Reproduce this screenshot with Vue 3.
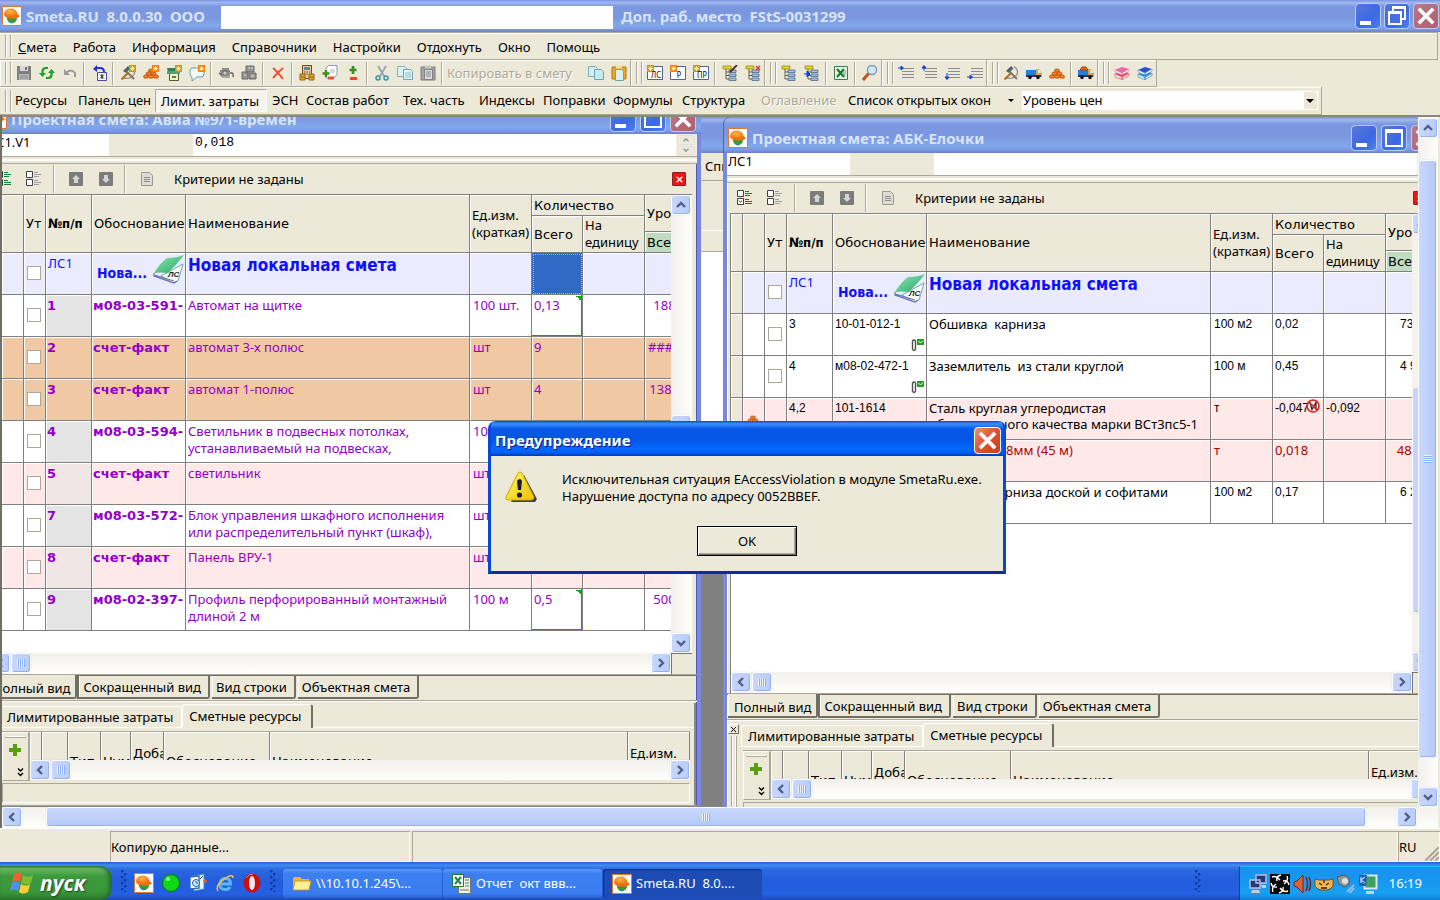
<script setup>
const menu = ['Работа', 'Информация', 'Справочники', 'Настройки', 'Отдохнуть', 'Окно', 'Помощь']

const appTitle = 'Smeta.RU  8.0.0.30  ООО'
const seatTitle = 'Доп. раб. место  FStS-0031299'
const tasks = [
  { icon: 'folder', text: '\\\\10.10.1.245\\...' },
  { icon: 'xls', text: 'Отчет  окт ввв...' },
  { icon: 'helmet', text: 'Smeta.RU  8.0....', on: true },
]

const toolGroups = [
  ['save', 'refresh', 'undo', '|wide', 'lock', '|', 'n-hammer', 'n-bricks', 'n-box', 'n-note', '|', 'teapot', 'blocks', '|', 'delete', '|', 'calc', 'sheetpm', 'plusminus', '|', 'cut', 'copy', 'paste', '|', 'text', 'copy2', 'paste2'],
  ['doc-ЛС', 'doc-Р', 'doc-ПР', '|', 'tree-pen', 'tree-x'],
  ['tree', 'tree-in', '|', 'excel', '|', 'search'],
  ['l-right', 'l-up', 'l-down', 'l-in'],
  ['hammer', 'truck', 'bricks', '|', 'truckload'],
  ['bookred', 'bookblue'],
]

const views = ['Ресурсы', 'Панель цен', 'Лимит. затраты', 'ЭСН', 'Состав работ', 'Тех. часть', 'Индексы', 'Поправки', 'Формулы', 'Структура', 'Оглавление']

const windows = [
  {
    id: 'avia', title: 'Проектная смета: Авиа №9/1-времен', cell: 'ЛС1.V1', value: '0,018', selected: true,
    rows: [
      { n: '1', code: 'м08-03-591-', name: 'Автомат на щитке', unit: '100 шт.', qty: '0,13', sum: '188,34', mark: true },
      { n: '2', code: 'счет-факт', name: 'автомат 3-х полюс', unit: 'шт', qty: '9', sum: '#####', tone: 'peach' },
      { n: '3', code: 'счет-факт', name: 'автомат 1-полюс', unit: 'шт', qty: '4', sum: '138,56', tone: 'peach' },
      { n: '4', code: 'м08-03-594-', name: 'Светильник в подвесных потолках,\nустанавливаемый на подвесках,', unit: '100 шт.', qty: '' },
      { n: '5', code: 'счет-факт', name: 'светильник', unit: 'шт', qty: '', tone: 'pink' },
      { n: '7', code: 'м08-03-572-', name: 'Блок управления шкафного исполнения\nили распределительный пункт (шкаф),', unit: 'шт.', qty: '' },
      { n: '8', code: 'счет-факт', name: 'Панель ВРУ-1', unit: 'шт', qty: '', tone: 'pink' },
      { n: '9', code: 'м08-02-397-', name: 'Профиль перфорированный монтажный\nдлиной 2 м', unit: '100 м', qty: '0,5', sum: '500,27', mark: true },
    ],
  },
  {
    id: 'abk', title: 'Проектная смета: АБК-Елочки', cell: 'ЛС1', value: '', selected: false,
    rows: [
      { n: '3', code: '10-01-012-1', name: 'Обшивка  карниза', unit: '100 м2', qty: '0,02', sum: '73,56', clip: true },
      { n: '4', code: 'м08-02-472-1', name: 'Заземлитель  из стали круглой', unit: '100 м', qty: '0,45', sum: '4 973', clip: true },
      { n: '4,2', code: '101-1614', name: 'Сталь круглая углеродистая\nобыкновенного качества марки ВСт3пс5-1', unit: 'т', qty: '-0,047', per: '-0,092', tone: 'pink', bare: true, brick: true, banned: true },
      { n: '', code: '', name: 'Сталь кругл 8мм (45 м)', unit: 'т', qty: '0,018', sum: '484,1', tone: 'pink red', bare: true },
      { n: '5', code: '', name: 'Обшивка карниза доской и софитами', unit: '100 м2', qty: '0,17', sum: '6 238' },
    ],
  },
]

const viewTabs = ['Полный вид', 'Сокращенный вид', 'Вид строки', 'Объектная смета']
const quick = ['helmet', 'ball', 'outlook', 'ie', 'opera']
const tray = ['net', 'swirl', 'horn', 'cat', 'speaker', 'kmon']
</script>

<template>
  <div class="app">
    <svg class="defs" aria-hidden="true">
      <defs>
        <radialGradient id="gHelm" cx=".4" cy=".3"><stop offset="0" stop-color="#ffb648" /><stop offset="1" stop-color="#f07010" /></radialGradient>
        <linearGradient id="gWarn" x1="0" y1="0" x2="1" y2="1"><stop offset="0" stop-color="#fffb60" /><stop offset="1" stop-color="#f0c000" /></linearGradient>
        <linearGradient id="gBook" x1="0" y1="0" x2="1" y2="1"><stop offset="0" stop-color="#8fe8b4" /><stop offset="1" stop-color="#27a866" /></linearGradient>
      </defs>
      <symbol id="helmet" viewBox="0 0 20 20"><path d="M.5.5h19v19H.5z" fill="#fff" stroke="#e07830" /><circle cx="10" cy="12" r="5" fill="#3aa0e0" /><path d="M5 12q1 5 5 5.500 4-1 5-5z" fill="#3a9c20" /><path d="M7 14q3 1 4 3-3 0-4-3z" fill="#3080e0" /><path d="M2 9Q2 2.500 8.500 2.500q6 0 7 5.500l2.500 2q-2 3-7 2.500Q4 13 2 9z" fill="url(#gHelm)" /></symbol>
      <symbol id="save" viewBox="0 0 16 16"><path d="M1 1h14v14H1z" fill="#808080" /><path d="M4 1h8v5H4z" fill="#d8d8d8" /><path d="M9 2h2v3H9z" fill="#707070" /><path d="M3 9h10v6H3z" fill="#b8b8b8" /><path d="M4 11h8M4 13h8" stroke="#909090" /></symbol>
      <symbol id="refresh" viewBox="0 0 16 16"><path d="M3.500 9V6.500q0-3.500 3.500-3.500h2M12.500 7v2.500q0 3.500-3.500 3.500H7" fill="none" stroke="#1da028" stroke-width="2.200" /><path d="M0 8h7l-3.500 4zM9 8h7l-3.500-4z" fill="#1da028" /></symbol>
      <symbol id="undo" viewBox="0 0 16 16"><path d="M4 8q5-5 9 0v4" fill="none" stroke="#999" stroke-width="2" /><path d="M2 4v6h6z" fill="#999" /></symbol>
      <symbol id="lock" viewBox="0 0 16 16"><path d="M3 3h5q4 0 4 4" fill="none" stroke="#2230d8" stroke-width="2" /><path d="M5 0v7L1 4z" fill="#2230d8" /><path d="M5.500 7.500h9v8h-9z" fill="#fff" stroke="#4a4aa0" /><path d="M8 9.500l4 4m0-4l-4 4M10 9v5" stroke="#222" /></symbol>
      <symbol id="hammer" viewBox="0 0 16 16"><path d="M11 1.500q5 3 3 8-3 5-10 3.500" fill="none" stroke="#8c9098" stroke-width="1.300" /><path d="M1.500 14.500L8 8" stroke="#b07020" stroke-width="2.200" /><path d="M7 7l7 7" stroke="#8a7040" stroke-width="1.800" /><path d="M3 6l5-5 2.500 2.500-4.500 4.500z" fill="#52646a" /></symbol>
      <symbol id="bricks" viewBox="0 0 16 16"><g fill="#f07c20" stroke="#a84808" stroke-width=".6"><rect x="5.500" y="4" width="5" height="3.200" rx="1.500" /><rect x="3" y="7" width="5" height="3.200" rx="1.500" /><rect x="8" y="7" width="5" height="3.200" rx="1.500" /><rect x=".5" y="10" width="5" height="3.200" rx="1.500" /><rect x="5.500" y="10" width="5" height="3.200" rx="1.500" /><rect x="10.500" y="10" width="5" height="3.200" rx="1.500" /></g></symbol>
      <symbol id="box" viewBox="0 0 16 16"><path d="M1 3h11l2 4H2z" fill="#348050" /><path d="M3.500 8.500h9v7h-9z" fill="#f6f0c0" stroke="#4c6030" /><path d="M1 6h13v3H1z" fill="#58a070" /><path d="M6 12h4" stroke="#608040" stroke-width="2" /></symbol>
      <symbol id="note" viewBox="0 0 16 16"><path d="M3 3h9q3 0 3 3v3q0 3-3 3H8l-5 4v-4q-2-1-2-3V6q0-3 2-3z" fill="#eefaf8" stroke="#6a9cac" /></symbol>
      <symbol id="star" viewBox="0 0 7 7"><path d="M0 0h7v7H0z" fill="#f08010" /><path d="M3.500 1v5M1 3.500h5M1.500 1.500l4 4m0-4l-4 4" stroke="#fff0a0" stroke-width=".9" /></symbol>
      <symbol id="teapot" viewBox="0 0 16 16"><ellipse cx="7" cy="9" rx="5" ry="4" fill="#888" /><path d="M4 4h7M2 6h10M12 8q4-1 3 4M1 8l3 2" stroke="#707070" stroke-width="1.600" fill="none" /><path d="M4 12h8" stroke="#aaa" stroke-width="2" /><circle cx="7" cy="8" r="1.500" fill="#ccc" /></symbol>
      <symbol id="blocks" viewBox="0 0 16 16"><path d="M5 1h8v6H5zM1 7h6v7H1zM8 8h7v6H8z" fill="#969696" stroke="#686868" /><path d="M7 3h2M10 3h2M3 10h2M10 11h3" stroke="#ddd" /></symbol>
      <symbol id="delete" viewBox="0 0 16 16"><path d="M3 3q5 4 10 11M13 3Q8 7 3 13" fill="none" stroke="#f05030" stroke-width="2" /></symbol>
      <symbol id="calc" viewBox="0 0 16 16"><path d="M3.500.5h9v13h-9z" fill="#e8c898" stroke="#704820" /><path d="M5 2h6v3H5z" fill="#30a090" /><path d="M5 7h6M5 9h6" stroke="#784c28" stroke-dasharray="1.500 1" /><path d="M1 9h5v6H1zM10 9h5v6h-5z" fill="#e0a828" stroke="#906810" /><path d="M1 12h5M10 12h5" stroke="#906810" /></symbol>
      <symbol id="sheetpm" viewBox="0 0 16 16"><path d="M6.500.5H15v9L12 13H4V3z" fill="#fff" stroke="#8898b8" /><path d="M8 5h5M8 7h5" stroke="#a8b0c8" /><path d="M4 5v7M.5 8.500h7" stroke="#38901c" stroke-width="2.400" /><path d="M6 13h6" stroke="#f05030" stroke-width="3" /></symbol>
      <symbol id="plusminus" viewBox="0 0 16 16"><path d="M8 1v8M4.500 5h7" stroke="#38901c" stroke-width="2.600" /><path d="M5 13.500h7" stroke="#e84820" stroke-width="3" /></symbol>
      <symbol id="cut" viewBox="0 0 16 16"><path d="M4 1l6 10M12 1L6 11" stroke="#9aa8b8" stroke-width="2" /><circle cx="4" cy="13" r="2" fill="none" stroke="#2c98a8" stroke-width="1.500" /><circle cx="12" cy="13" r="2" fill="none" stroke="#2c98a8" stroke-width="1.500" /></symbol>
      <symbol id="copy" viewBox="0 0 16 16"><path d="M.5 1.500h7l2 2v8h-9z" fill="#d8f0f0" stroke="#84b4bc" /><path d="M6.500 4.500h7l2 2v8h-9z" fill="#e4f6f8" stroke="#70a4b0" /><path d="M8 8h6M8 10h6M8 12h6" stroke="#90bcc4" /></symbol>
      <symbol id="copy2" viewBox="0 0 16 16"><path d="M.5 1.500h7l2 2v8h-9z" fill="#d4eff2" stroke="#74b0bc" /><path d="M6.500 4.500h7l2 2v8h-9z" fill="#c8eaf0" stroke="#68a8b8" /></symbol>
      <symbol id="paste" viewBox="0 0 16 16"><path d="M1 2h14v13H1z" fill="#a4a4a4" stroke="#7c7c7c" /><path d="M5 .5h6v3H5z" fill="#c8c8c8" /><path d="M4.500 4.500h8v10h-8z" fill="#dcdcdc" stroke="#808080" /><path d="M6 7h5M6 9h5M6 11h5" stroke="#888" /></symbol>
      <symbol id="paste2" viewBox="0 0 16 16"><path d="M1 2h14v12H1z" fill="#f0a818" stroke="#b87808" /><path d="M5 .5h6v3H5z" fill="#f8e098" /><path d="M4.500 4.500h6l2 2v9h-8z" fill="#d8f0f4" stroke="#68a4b0" /></symbol>
      <symbol id="tree" viewBox="0 0 16 16"><path d="M1 1h8v3H1z" fill="#e8d820" stroke="#8c7c10" stroke-width=".7" /><path d="M4 4v10h4M4 7h4M4 10.500h4" stroke="#606050" fill="none" /><path d="M7 5h7v2.500H7zM7 9h7v2.500H7zM7 13h7v2.500H7z" fill="#a8c0e0" stroke="#486898" stroke-width=".8" /></symbol>
      <symbol id="excel" viewBox="0 0 16 16"><path d="M1.500 1.500h13v13h-13z" fill="#e8f4e8" stroke="#388048" /><path d="M4 4l7 8M11 4l-7 8" stroke="#187830" stroke-width="2.200" /><path d="M10 6h3M10 8h3M10 10h3" stroke="#60a868" /></symbol>
      <symbol id="search" viewBox="0 0 16 16"><path d="M1 15l6-7" stroke="#c05818" stroke-width="3" /><circle cx="10" cy="5" r="4.500" fill="#d0e8fc" stroke="#8898b8" stroke-width="1.400" /></symbol>
      <symbol id="lines" viewBox="0 0 16 16"><path d="M4 3.500h12M4 6.500h12M4 9.500h12M4 12.500h12" stroke="#8c8c96" /></symbol>
      <symbol id="truck" viewBox="0 0 16 16"><path d="M0 5h10v5H0z" fill="#2080e0" /><path d="M10 4h3l3 4v4h-6z" fill="#f0a030" /><path d="M12 5h2l1 3h-3z" fill="#d0f0ff" /><path d="M0 10h15v2H0z" fill="#203860" /><circle cx="4" cy="12.500" r="1.700" fill="#111" /><circle cx="12" cy="12.500" r="1.700" fill="#111" /></symbol>
      <symbol id="bookred" viewBox="0 0 16 16"><path d="M1 9l7-3 7 2-7 4z" fill="#e84858" /><path d="M1 9v3l7 2.500v-2zM8 12.500l7-4v2l-7 4z" fill="#fff" stroke="#d04860" stroke-width=".7" /><path d="M1 5l7-3 7 2-7 4z" fill="#f068a8" /><path d="M1 5v2l7 3V8zM8 8l7-4v2l-7 4z" fill="#fff" stroke="#d05080" stroke-width=".5" /></symbol>
      <symbol id="bookblue" viewBox="0 0 16 16"><path d="M1 9l7-3 7 2-7 4z" fill="#2888d8" /><path d="M1 9v3l7 2.500v-2zM8 12.500l7-4v2l-7 4z" fill="#fff" stroke="#2880c8" stroke-width=".7" /><path d="M1 5l7-3 7 2-7 4z" fill="#2850d0" /><path d="M1 5v2l7 3V8zM8 8l7-4v2l-7 4z" fill="#fff" stroke="#3080c0" stroke-width=".5" /></symbol>
      <symbol id="chL" viewBox="0 0 10 10"><path d="M7 1L3 5l4 4" fill="none" stroke="#4d6185" stroke-width="2.400" /></symbol>
      <symbol id="chR" viewBox="0 0 10 10"><path d="M3 1l4 4-4 4" fill="none" stroke="#4d6185" stroke-width="2.400" /></symbol>
      <symbol id="chU" viewBox="0 0 10 10"><path d="M1 7l4-4 4 4" fill="none" stroke="#4d6185" stroke-width="2.400" /></symbol>
      <symbol id="chD" viewBox="0 0 10 10"><path d="M1 3l4 4 4-4" fill="none" stroke="#4d6185" stroke-width="2.400" /></symbol>
      <symbol id="listOn" viewBox="0 0 16 16"><path d="M1.500.5h6v6h-6zM1.500 8.500h6v6h-6z" fill="#fff" stroke="#404040" /><path d="M9 1.500h4M9 3.500h7M9 5.500h5M9 9.500h4M9 11.500h7M9 13.500h7" stroke="#188030" /><path d="M3 10.500l1.500 2 1.500-2" fill="none" stroke="#188030" /></symbol>
      <symbol id="listOff" viewBox="0 0 16 16"><path d="M1.500.5h6v6h-6zM1.500 8.500h6v6h-6z" fill="#fff" stroke="#404040" /><path d="M9 1.500h4M9 3.500h7M9 5.500h5M9 9.500h4M9 11.500h7M9 13.500h5" stroke="#a0a0a0" /></symbol>
      <symbol id="moveUp" viewBox="0 0 14 14"><rect width="14" height="14" rx="1" fill="#7c7c7c" /><path d="M7 3l4 4H9v4H5V7H3z" fill="#d4d4d4" /></symbol>
      <symbol id="moveDown" viewBox="0 0 14 14"><rect width="14" height="14" rx="1" fill="#7c7c7c" /><path d="M7 11l4-4H9V3H5v4H3z" fill="#d4d4d4" /></symbol>
      <symbol id="sheet" viewBox="0 0 12 14"><path d="M.5.5h8l3 3v10H.5z" fill="#dcdcd4" stroke="#9a9a94" /><path d="M3 5.500h6M3 7.500h6M3 9.500h6" stroke="#8c8c88" /></symbol>
      <symbol id="book" viewBox="0 0 32 30"><path d="M2 20l12 2 15-14-3 15-6 5-18-6z" fill="#c8ecec" /><path d="M12 19L30 9l-5 17-5 2-12-7z" fill="#fdfdf8" stroke="#70a8b0" /><path d="M1 18Q8 7 14 3 24 3 31 0 25 8 15 18 7 17 1 18z" fill="url(#gBook)" /><path d="M1 18v3l20 7 3-2M1 20l20 6" fill="none" stroke="#7070b0" stroke-width="1.200" /><text x="15" y="22" font-size="8" font-weight="bold" font-style="italic" font-family="Liberation Sans, sans-serif" fill="#222">ЛС</text></symbol>
      <symbol id="clip" viewBox="0 0 13 14"><path d="M1.500 3v8q1.500 3 3 0V3Q3 1 1.500 3z" fill="#fff" stroke="#505050" stroke-width="1.400" /><path d="M6 1h7v6H6z" fill="#20a020" /><path d="M7.500 3l2 2L12 2.500" stroke="#fff" fill="none" /></symbol>
      <symbol id="ban" viewBox="0 0 16 16"><path d="M5 4.500l2 7 4-7v7" fill="none" stroke="#333" stroke-width="1.400" /><circle cx="8" cy="8" r="6" fill="none" stroke="#e02018" stroke-width="1.600" /><path d="M4 4l8 8" stroke="#e02018" stroke-width="1.400" /></symbol>
      <symbol id="plus" viewBox="0 0 12 12"><path d="M4 0h4v4h4v4H8v4H4V8H0V4h4z" fill="#58a010" /></symbol>
      <symbol id="more" viewBox="0 0 7 9"><path d="M1 .5l2.500 2.500L6 .5M1 5l2.500 2.500L6 5" fill="none" stroke="#000" stroke-width="1.400" /></symbol>
      <symbol id="cross" viewBox="0 0 20 20"><path d="M2 2l16 16M18 2L2 18" stroke="#fff" stroke-width="4" /></symbol>
      <symbol id="warn" viewBox="0 0 32 32"><path d="M6 31h24l2-3L19 4z" fill="#404058" /><path d="M15 1q2 0 3 3l11 22q0 3-3 3H3q-3 0-2-3L12 4q1-3 3-3z" fill="url(#gWarn)" stroke="#d0a800" /><path d="M12 10q3-4 5 0l-1 9h-3z" fill="#181838" /><circle cx="14.500" cy="24" r="2.600" fill="#181838" /></symbol>
      <symbol id="flag" viewBox="0 0 24 22"><path d="M4 2q5-3 8 0l-2 8q-4-3-8 0z" fill="#f06030" /><path d="M13 3q5 3 10 0l-2 8q-5 3-10 0z" fill="#78c030" /><path d="M2 11q4-3 8 0l-2 8q-4-3-8 0z" fill="#5090f0" /><path d="M11 12q5 3 9 0l-2 8q-5 3-9 0z" fill="#fcd030" /></symbol>
      <symbol id="ball" viewBox="0 0 20 20"><circle cx="10" cy="10" r="8.500" fill="#10d818" stroke="#087808" /><circle cx="7" cy="6" r="2" fill="#90ff90" /></symbol>
      <symbol id="outlook" viewBox="0 0 20 20"><path d="M5 3l11-2v15l-10 2z" fill="#e8f4ff" stroke="#4888c8" /><path d="M2 4l9-1v12l-9 1z" fill="#fff" stroke="#2870b8" stroke-width="1.400" /><circle cx="8" cy="10" r="3.500" fill="#d0e8ff" stroke="#2860a8" /><path d="M8 8v2h2M12 6l3-3" stroke="#2860a8" fill="none" /><path d="M15 8h4M17 6v4" stroke="#f06020" stroke-width="1.500" /></symbol>
      <symbol id="ie" viewBox="0 0 20 20"><path d="M5 11h10.500q0-5.500-5-5.500T5 11t5.500 5.500q3 0 4.500-2.500" fill="none" stroke="#58b8f8" stroke-width="3" /><path d="M3 18Q0 13 9 6q9-6 9-1" fill="none" stroke="#f0c040" stroke-width="1.600" /></symbol>
      <symbol id="opera" viewBox="0 0 20 20"><ellipse cx="10" cy="10" rx="8.500" ry="9.500" fill="#c81010" /><ellipse cx="10" cy="10" rx="3" ry="7" fill="#f4e8ec" /><path d="M4 5q3-4 7-4" stroke="#ff8070" fill="none" /></symbol>
      <symbol id="folder" viewBox="0 0 20 16"><path d="M1 2q0-1 2-1h5l2 2h7v10H1z" fill="#e8b830" /><path d="M1 14L3 5h16l-2 9z" fill="#fff098" stroke="#c89018" stroke-width=".8" /></symbol>
      <symbol id="xls" viewBox="0 0 20 20"><path d="M6.500 3.500h12v16h-12z" fill="#e8f0e8" stroke="#707870" /><path d="M13 6h4M13 9h4M13 12h4M8 16h9" stroke="#707870" /><path d="M.5.5h11v12H.5z" fill="#fff" stroke="#207830" /><path d="M3 3l6 7M9 3l-6 7" stroke="#208838" stroke-width="2" /></symbol>
      <symbol id="net" viewBox="0 0 18 20"><path d="M7 1h10v8H7zM1 6h10v8H1z" fill="#283870" stroke="#b8c0e8" stroke-width="1.400" /><path d="M3 16h7l1 3H2zM12 11h5v3h-4z" fill="#c8c8e8" /></symbol>
      <symbol id="swirl" viewBox="0 0 20 20"><path d="M0 0h20v20H0z" fill="#050505" /><g fill="none" stroke="#fff" stroke-width="1.400"><path d="M10 6Q6 1 2 3M14 10q5-4 3-8M10 14q4 5 8 3M6 10q-5 4-3 8M13 7q5-1 6 4M7 13q-5 1-6-4M13 13q1 5-4 6M7 7q-1-5 4-6" /></g></symbol>
      <symbol id="horn" viewBox="0 0 18 20"><path d="M1 8l3-1 6-6v18l-6-6-3-1z" fill="#e06038" stroke="#782010" /><path d="M13 3q3 7 0 14M16 3q3 7 0 14" fill="none" stroke="#782010" stroke-width="1.500" /></symbol>
      <symbol id="cat" viewBox="0 0 20 20"><path d="M1 5l4 1h10l4-1v7l-3 3-3 1H7l-3-1-3-3z" fill="#f0b850" stroke="#805010" /><path d="M5 9l3 2M15 9l-3 2M7 14h6M10 6v3" stroke="#402000" stroke-width="1.300" /></symbol>
      <symbol id="speaker" viewBox="0 0 20 20"><path d="M1 3l7-2q7 2 5 9l-4 3-6-3z" fill="#909898" stroke="#505858" /><circle cx="9" cy="7" r="3" fill="#d8e0e0" /><path d="M11 18l7-7M14 19l4-5" stroke="#98b8f8" stroke-width="2" /></symbol>
      <symbol id="kmon" viewBox="0 0 20 20"><path d="M6.500 1.500h12v13h-12z" fill="#40a060" stroke="#d8e8f0" stroke-width="2" /><path d="M8 17h8v3H8z" fill="#c8d0d8" /><path d="M1 1h8l-1 11H1z" fill="#1860c0" /><path d="M3 3v6M7 3L3 6l4 3" stroke="#fff" fill="none" /></symbol>
    </svg>

    <header class="caption main">
      <svg class="i20"><use href="#helmet" /></svg>
      <span class="ttl name">{{ appTitle }}</span>
      <span class="blank"></span>
      <span class="ttl">{{ seatTitle }}</span>
      <div class="cbs">
        <button class="cb" aria-label="Свернуть"><i class="min"></i></button>
        <button class="cb" aria-label="Восстановить"><i class="res"></i><i class="res2"></i></button>
        <button class="cb x" aria-label="Закрыть"><svg><use href="#cross" /></svg></button>
      </div>
    </header>

    <nav class="menu">
      <i class="grip"></i>
      <button><u>С</u>мета</button>
      <button v-for="m in menu" :key="m">{{ m }}</button>
    </nav>

    <div class="tools">
      <div v-for="(g, gi) in toolGroups" :key="gi" class="tg">
        <i class="grip"></i>
        <template v-for="(t, ti) in g" :key="ti">
          <i v-if="t[0] === '|'" class="sep" :class="{ wide: t === '|wide' }"></i>
          <button v-else-if="t === 'text'" class="txt" disabled>Копировать в смету</button>
          <button v-else :class="{ slim: t === 'lock' }" :aria-label="t">
            <svg class="i16" viewBox="0 0 16 16">
              <template v-if="t.startsWith('n-')">
                <use :href="'#' + t.slice(2)" width="16" height="16" />
                <use href="#star" x="9" y="0" width="7" height="7" />
              </template>
              <template v-else-if="t.startsWith('doc-')">
                <path d="M.5 1.500h15v13H.5z" fill="#fff" stroke="#506090" />
                <use href="#star" width="7" height="7" />
                <text x="9" y="13" text-anchor="middle" font-size="8" font-family="DejaVu Sans Condensed, sans-serif" fill="#111">{{ t.slice(4) }}</text>
              </template>
              <template v-else-if="t.startsWith('tree-')">
                <use href="#tree" width="16" height="16" />
                <path v-if="t === 'tree-pen'" d="M8 7l7-7" stroke="#503010" stroke-width="1.800" />
                <path v-else-if="t === 'tree-x'" d="M11 1l4 4m0-4l-4 4" stroke="#e03020" stroke-width="1.300" />
                <path v-else d="M0 9h4M3 6l3 3-3 3z" stroke="#1040d0" fill="#1040d0" />
              </template>
              <template v-else-if="t.startsWith('l-')">
                <use href="#lines" width="16" height="16" />
                <path v-if="t === 'l-right'" d="M0 3h3M3 1l2.500 2L3 5z" stroke="#1040d0" fill="#1040d0" />
                <path v-else-if="t === 'l-up'" d="M3 6v-3M1 3l2-2.500L5 3z" stroke="#1040d0" fill="#1040d0" />
                <path v-else-if="t === 'l-down'" d="M3 8v4M1 12l2 2.500L5 12z" stroke="#1040d0" fill="#1040d0" />
                <path v-else d="M0 12h3M3 10l2.500 2L3 14z" stroke="#1040d0" fill="#1040d0" />
              </template>
              <template v-else-if="t === 'truckload'">
                <use href="#truck" width="16" height="16" />
                <path d="M2 5l2-3h4l2 3z" fill="#e87018" stroke="#a04008" />
              </template>
              <use v-else :href="'#' + t" width="16" height="16" />
            </svg>
          </button>
        </template>
      </div>
    </div>

    <div class="views">
      <div class="vbar">
        <i class="grip"></i>
        <button v-for="v in views" :key="v" :class="{ on: v === 'Лимит. затраты' }" :disabled="v === 'Оглавление'">{{ v }}</button>
        <button class="drop">Список открытых окон</button>
        <select class="price" aria-label="Уровень цен"><option>Уровень цен</option></select>
        <i class="dd" aria-hidden="true"></i>
      </div>
    </div>

    <main class="mdi">
      <div class="client">
        <section class="win back">
          <div class="caption"></div>
          <div class="bmenu">Список</div>
          <div class="bbar"></div>
          <div class="bline"></div>
        </section>

        <section v-for="w in windows" :key="w.id" class="win" :class="w.id">
          <header class="caption">
            <svg class="i20"><use href="#helmet" /></svg>
            <span class="ttl">{{ w.title }}</span>
            <div class="cbs">
              <button class="cb" aria-label="Свернуть"><i class="min"></i></button>
              <button class="cb" aria-label="Развернуть"><i class="max"></i></button>
              <button class="cb x" aria-label="Закрыть"><svg><use href="#cross" /></svg></button>
            </div>
          </header>
          <div class="body">
            <div class="formula">
              <span class="addr">{{ w.cell }}</span>
              <input class="val" :value="w.value" aria-label="Значение">
              <div class="spin"><button aria-label="Больше"><svg><use href="#chU" /></svg></button><button aria-label="Меньше"><svg><use href="#chD" /></svg></button></div>
            </div>
            <div class="rule"></div>
            <div class="filter">
              <button aria-label="Отметить"><svg class="i16"><use href="#listOn" /></svg></button>
              <button aria-label="Снять"><svg class="i16"><use href="#listOff" /></svg></button>
              <i class="fsep"></i>
              <button aria-label="Вверх"><svg class="i14"><use href="#moveUp" /></svg></button>
              <button aria-label="Вниз"><svg class="i14"><use href="#moveDown" /></svg></button>
              <i class="fsep two"></i>
              <button class="fsheet" aria-label="Критерии"><svg class="i14"><use href="#sheet" /></svg></button>
              <span class="crit">Критерии не заданы</span>
              <button class="redx" aria-label="Сбросить"><svg><use href="#cross" /></svg></button>
            </div>
            <div class="grid">
              <div class="view">
                <table class="est">
                  <colgroup><col class="c12"><col class="c22"><col class="c22"><col class="c46"><col class="c94"><col class="c284"><col class="c62"><col class="c51"><col class="c62"><col class="c62"></colgroup>
                  <thead>
                    <tr class="h21">
                      <th rowspan="3"></th><th rowspan="3"></th><th rowspan="3">Ут</th><th rowspan="3" class="b">№п/п</th><th rowspan="3">Обоснование</th><th rowspan="3">Наименование</th><th rowspan="3" class="in">Ед.изм.<br>(краткая)</th><th colspan="2">Количество</th><th rowspan="2">Уровень</th>
                    </tr>
                    <tr class="h16"><th rowspan="2">Всего</th><th rowspan="2" class="in">На<br>единицу</th></tr>
                    <tr class="h21"><th class="green">Всего</th></tr>
                  </thead>
                  <tbody>
                    <tr class="lilac">
                      <td class="gut"></td><td></td><td><input type="checkbox" class="ck" aria-label="Утвердить ЛС1"></td><td>ЛС1</td>
                      <td><div class="code"><b>Нова...</b><svg><use href="#book" /></svg></div></td>
                      <td><strong>Новая локальная смета</strong></td><td></td><td :class="{ sel: w.selected }"></td><td></td><td></td>
                    </tr>
                    <tr v-for="(r, ri) in w.rows" :key="ri" :class="r.tone">
                      <td class="gut"></td>
                      <td><svg v-if="r.brick" class="i16 brick"><use href="#bricks" /></svg></td>
                      <td><input v-if="!r.bare" type="checkbox" class="ck" :aria-label="'Утвердить ' + r.n"></td>
                      <td class="num">{{ r.n }}</td>
                      <td class="cd">{{ r.code }}<svg v-if="r.clip" class="clip"><use href="#clip" /></svg></td>
                      <td><div class="nm">{{ r.name }}</div></td>
                      <td class="un">{{ r.unit }}</td>
                      <td class="qty" :class="{ mark: r.mark }">{{ r.qty }}<svg v-if="r.banned" class="i16 ban"><use href="#ban" /></svg></td>
                      <td class="qty">{{ r.per }}</td>
                      <td class="sum">{{ r.sum }}</td>
                    </tr>
                  </tbody>
                </table>
              </div>
              <div class="vs">
                <button class="sb" aria-label="Вверх"><svg><use href="#chU" /></svg></button>
                <i class="sb vthumb"></i>
                <button class="sb end" aria-label="Вниз"><svg><use href="#chD" /></svg></button>
              </div>
              <div class="hs">
                <button class="sb" aria-label="Влево"><svg><use href="#chL" /></svg></button>
                <i class="sb hatch"></i>
                <button class="sb end" aria-label="Вправо"><svg><use href="#chR" /></svg></button>
              </div>
              <div class="corner"></div>
            </div>
            <div class="tabs">
              <button v-for="(t, i) in viewTabs" :key="t" :class="{ on: !i }">{{ t }}</button>
            </div>
            <div class="lower">
              <div class="dock"><button aria-label="Закрыть панель"><svg viewBox="0 0 7 7"><path d="M1 1l5 5M6 1L1 6" stroke="#000" /></svg></button><i></i></div>
              <div class="res-pane">
                <div class="tabs2"><button>Лимитированные затраты</button><button class="on">Сметные ресурсы</button></div>
                <div class="rbox">
                  <div class="pal"><i></i><button aria-label="Добавить"><svg><use href="#plus" /></svg></button><svg class="more"><use href="#more" /></svg></div>
                  <div class="rgrid">
                    <div class="rview">
                      <table class="rt">
                        <colgroup><col class="c12"><col class="c26"><col class="c33"><col class="c30"><col class="c33"><col class="c106"><col class="c358"><col class="c62"></colgroup>
                        <thead><tr><th></th><th></th><th>Тип</th><th>Нум</th><th>Доба<br>влен</th><th>Обоснование</th><th>Наименование</th><th class="in">Ед.изм.<br>(кр.)</th></tr></thead>
                      </table>
                    </div>
                    <div class="hs">
                      <button class="sb" aria-label="Влево"><svg><use href="#chL" /></svg></button>
                      <i class="sb hatch"></i>
                      <button class="sb end" aria-label="Вправо"><svg><use href="#chR" /></svg></button>
                    </div>
                  </div>
                </div>
                <div class="rstat"></div>
              </div>
            </div>
          </div>
        </section>
      </div>
      <div class="vs mv">
        <button class="sb" aria-label="Вверх"><svg><use href="#chU" /></svg></button>
        <i class="sb vthumb hatchv"></i>
        <button class="sb end" aria-label="Вниз"><svg><use href="#chD" /></svg></button>
      </div>
      <div class="hs mh">
        <button class="sb" aria-label="Влево"><svg><use href="#chL" /></svg></button>
        <i class="sb hatch"></i>
        <button class="sb" aria-label="Вправо"><svg><use href="#chR" /></svg></button>
      </div>
    </main>

    <footer class="status"><span></span><span class="p1">Копирую данные...</span><span class="p2"></span><span class="p3">RU</span>
      <svg class="sizer" viewBox="0 0 14 14"><path d="M0 14L14 0M5 14l9-9M10 14l4-4" stroke="#a8a494" stroke-width="2" /></svg>
    </footer>

    <footer class="task">
      <button class="start"><svg><use href="#flag" /></svg><em>пуск</em></button>
      <i class="dots"></i>
      <div class="quick"><button v-for="q in quick" :key="q" :aria-label="q"><svg class="i20"><use :href="'#' + q" /></svg></button></div>
      <i class="dots"></i>
      <div class="tbs">
        <button v-for="t in tasks" :key="t.icon" class="tb" :class="{ on: t.on }"><svg class="i20"><use :href="'#' + t.icon" /></svg><span>{{ t.text }}</span></button>
      </div>
      <i class="dots"></i>
      <div class="tray"><svg v-for="t in tray" :key="t" class="i20"><use :href="'#' + t" /></svg><time>16:19</time></div>
    </footer>

    <div class="dialog" role="alertdialog" aria-labelledby="dlg-title">
      <header><h1 id="dlg-title">Предупреждение</h1><button class="cb x" aria-label="Закрыть"><svg><use href="#cross" /></svg></button></header>
      <div class="dbody">
        <svg class="warn"><use href="#warn" /></svg>
        <p>Исключительная ситуация EAccessViolation в модуле SmetaRu.exe.<br>Нарушение доступа по адресу 0052BBEF.</p>
        <button class="ok">OK</button>
      </div>
    </div>
  </div>
</template>

<style>
html, body { margin: 0; background: #ece9d8; }
</style>

<style scoped>
* { box-sizing: border-box; }
.app { position: relative; display: flex; flex-direction: column; min-height: 100vh; overflow: hidden; background: #ece9d8; color: #000; font: 13px/17px "Noto Sans", sans-serif; }
.defs { position: absolute; width: 0; height: 0; }
button { font: inherit; color: inherit; background: none; border: 0; padding: 0; margin: 0; white-space: pre; }
svg { display: block; flex: none; }
.i20 { width: 20px; height: 20px; }
.i16 { width: 16px; height: 16px; }
.i14 { width: 14px; height: 14px; }
.grip { width: 6px; height: 22px; flex: none; border: solid #aca899; border-width: 0 1px; box-shadow: inset 1px 0 #fff, inset -2px 0 #ece9d8, 1px 0 #fff; }

.caption { display: flex; align-items: center; height: 36px; padding: 6px 5px 0; background: linear-gradient(#7a93e0, #a0b8f0 8%, #7b97e0 20%, #7b97e0 55%, #82a8ea 80%, #7a98e0 92%, #6c80c8); color: #d8e4f8; }
.ttl { font: bold 15px/20px "Noto Sans", sans-serif; margin-left: 4px; white-space: pre; }
.main { height: 32px; padding: 0 1px 0 2px; }
.main .name { width: 191px; }
.main .blank { width: 392px; height: 23px; margin: 2px 4px 0; background: #fff; }
.cbs { margin-left: auto; display: flex; gap: 3px; }
.cb { position: relative; width: 26px; height: 26px; border: 1px solid #b8ccf4; border-radius: 4px; background: linear-gradient(135deg, #5878d8, #3c68e4 60%, #4a80f0); }
.cb.x { background: linear-gradient(135deg, #b87888, #b06070); }
.cb svg { width: 18px; height: 18px; margin: 3px; }
.cb i { position: absolute; }
.min { left: 4px; bottom: 3px; width: 11px; height: 4px; background: #fff; }
.max { left: 3px; top: 3px; width: 18px; height: 18px; border: 2px solid #fff; border-top-width: 4px; }
.res { right: 3px; top: 2px; width: 14px; height: 14px; border: 2px solid #fff; border-top-width: 3px; }
.res2 { left: 3px; bottom: 3px; width: 14px; height: 14px; border: 2px solid #fff; border-top-width: 3px; background: #4470e4; }

.menu { display: flex; align-items: center; height: 28px; padding-left: 5px; border-top: 1px solid #aca899; border-bottom: 1px solid #aca899; box-shadow: inset 0 1px #fff; margin-right: 2px; border-right: 1px solid #aca899; }
.menu button { margin-left: 16px; line-height: 18px; padding-top: 2px; }
.menu .grip + button { margin-left: 7px; }
.tools { display: flex; height: 27px; }
.tg { display: flex; align-items: center; padding-left: 5px; border: solid #aca899; border-width: 0 1px 1px 0; box-shadow: inset 1px 1px #fff; }
.tg button { width: 23px; height: 23px; display: flex; align-items: center; justify-content: center; }
.tg .grip { margin-right: 1px; }
.tg button.slim { width: 20px; }
.tg button.txt { width: 139px; height: auto; justify-content: flex-start; padding-left: 2px; color: #aca899; text-shadow: 1px 1px #fff; }
.sep { width: 6px; height: 23px; flex: none; background: linear-gradient(90deg, transparent 2px, #aca899 2px, #aca899 3px, #fff 3px, #fff 4px, transparent 4px); }
.sep.wide { width: 9px; }
.views { height: 28px; }
.vbar { position: relative; display: grid; grid-template-columns: 7px 63px 80px 114px 34px 97px 76px 64px 70px 69px 79px 87px 177px 296px; align-items: center; width: max-content; height: 28px; padding: 0 3px 0 5px; border: solid #aca899; border-width: 0 1px 1px 0; box-shadow: inset 0 1px #fff; }
.vbar button { height: 23px; text-align: left; padding-left: 3px; }
.vbar button.on { width: 112px; border: 1px solid #aca899; border-right-color: #fff; border-bottom-color: #fff; background: #f6f4ec; padding: 2px 0 0 5px; }
.vbar button:disabled { color: #aca899; text-shadow: 1px 1px #fff; }
.drop { position: relative; }
.drop::after, .dd::after { content: ""; position: absolute; border: solid transparent; border-width: 3px 3px 0; border-top-color: #000; right: 8px; top: 10px; }
.price { appearance: none; width: 296px; height: 19px; border: 0; border-radius: 0; background: #fff; font: inherit; color: #000; padding: 0 1px; }
.dd { position: absolute; right: 4px; top: 5px; width: 13px; height: 17px; background: #ece9d8; }
.dd::after { border-width: 4px 4px 0; right: 3px; top: 7px; }

.mdi { flex: 1; display: grid; grid-template-columns: minmax(0, 1fr) 20px; grid-template-rows: minmax(690px, 1fr) 21px; border: solid #716f64; border-width: 2px 0 0 2px; border-top-color: #8c897c; padding-right: 2px; }
.client { position: relative; overflow: hidden; background: #808080; }
.win { position: absolute; width: 719px; top: 0; }
.win.back { left: 560px; height: 440px; background: #fff; }
.win.avia { left: -20px; top: -19px; }
.win.abk { left: 721px; }
.bmenu { height: 28px; padding: 5px 0 0 143px; background: #ece9d8; border-bottom: 1px solid #aca899; }
.bbar { height: 50px; background: #ece9d8; border-bottom: 1px solid #fff; }
.bline { height: 21px; background: #ece9d8; border-bottom: 1px solid #aca899; }
.win:not(.back) .caption { border-top-left-radius: 7px; box-shadow: inset 1px 0 #5060c8; }
.win .cbs { gap: 4px; }
.body { border: solid #7888dc; border-width: 0 4px; background: #ece9d8; box-shadow: inset 1px 0 #fff, 0 0 0 1px #5058b8 inset; }
.formula { display: flex; height: 23px; border-bottom: 1px solid #aca899; background: #fff; }
.addr { width: 123px; padding-left: 1px; line-height: 17px; border-right: 1px solid #fff; }
.val { flex: 1; min-width: 0; border: 0; border-left: 84px solid #ece9d8; background: #fff; font: 13px/17px "Liberation Mono", monospace; padding: 0 0 5px 2px; outline: 0; }
.spin { width: 21px; display: flex; flex-direction: column; background: #f0eee4; padding: 1px 2px 1px 1px; gap: 1px; }
.spin button { height: 10px; border: 1px solid #dcdacc; border-radius: 2px; background: #ece9d8; opacity: .6; }
.spin svg { width: 6px; height: 6px; margin: 0 auto; }
.rule { height: 7px; border-bottom: 1px solid #aca899; background: linear-gradient(#ece9d8 2px, #fff 2px, #fff 4px, #ece9d8 4px); }
.filter { display: flex; align-items: center; height: 30px; padding: 0 10px 0 9px; }
.filter button { width: 16px; margin-right: 14px; display: flex; justify-content: center; }
.fsep { width: 2px; height: 28px; background: #aca899; border-right: 1px solid #fff; margin: 0 13px 0 -2px; }
.fsep.two { margin: 0 13px 0 -4px; }
.filter button.fsheet { margin-right: 19px; }
.crit { padding-top: 1px; }
.filter button.redx { width: 14px; height: 14px; margin: 0 1px 0 auto; background: #e81818; border: 1px solid #902020; border-radius: 1px; align-items: center; }
.redx svg { width: 7px; height: 7px; }
.grid { display: grid; grid-template: 458px 21px / minmax(0, 1fr) 21px; margin: 0 5px 0 3px; border: solid #808080; border-width: 1px 0 0 1px; }
.view { overflow: hidden; background: #fff; }
table { border-collapse: separate; border-spacing: 0; table-layout: fixed; }
.est { width: 717px; }
.c12 { width: 12px; } .c22 { width: 22px; } .c46 { width: 46px; } .c94 { width: 94px; } .c284 { width: 284px; } .c62 { width: 62px; } .c51 { width: 51px; }
.c26 { width: 26px; } .c33 { width: 33px; } .c30 { width: 30px; } .c106 { width: 106px; } .c358 { width: 358px; }
th { font-weight: normal; text-align: left; vertical-align: middle; background: #ece9d8; border: solid #808080; border-width: 0 1px 1px 0; padding: 0 0 0 2px; overflow: hidden; white-space: nowrap; box-shadow: inset 1px 1px #fff; font-family: "DejaVu Sans", sans-serif; font-size: 13px; line-height: 17px; }
th.b { font: bold 13px/17px "DejaVu Sans Condensed", sans-serif; }
th.in { font-family: "Noto Sans", sans-serif; }
th.green { background: #c0dcc0; }
.h21 { height: 21px; } .h16 { height: 16px; }
tbody tr { height: 42px; }
td { position: relative; height: 42px; border: solid #808080; border-width: 0 1px 1px 0; padding: 2px 0 0 2px; vertical-align: top; overflow: hidden; white-space: nowrap; box-shadow: inset 1px 1px #fff; }
.nm { white-space: pre; height: 36px; overflow: hidden; }
.avia tbody { color: #9400c8; }
.avia .num, .avia .cd { font: bold 13px/17px "DejaVu Sans", sans-serif; padding-left: 1px; }
.avia .num { background: #e4e4e4; }
.avia .pink .num { background: #f0e6e6; }
.avia .peach .num { background: none; }
.abk tbody { line-height: 16px; }
.abk .num, .abk .cd, .abk .qty, .abk .sum, .abk .un { font: 12px/16px "Liberation Sans", sans-serif; }
.abk .un, .avia .un { padding-left: 3px; }
.avia tr.lilac, .abk tr.lilac { color: #1010ff; background: #eaebff; }
.peach { background: #f0c8a4; }
.pink { background: #ffe9e8; }
.abk .red { color: #b00000; }
.abk .red .qty, .abk .red .sum, .abk .red .un { font: 13px/16px "Noto Sans", sans-serif; }
td.gut { background: #ece9d8; }
td.sum { text-align: right; padding-right: 12px; }
.peach td.sum { padding-right: 16px; }
.abk td.sum { padding-right: 17px; }
.ck { appearance: none; display: block; width: 14px; height: 14px; margin: 11px 0 0 1px; border: 1px solid #aca899; background: #fff; }
.code { display: flex; align-items: center; padding-left: 3px; justify-content: space-between; }
.code b { padding-top: 7px; font: bold 14px/17px "DejaVu Sans Condensed", sans-serif; }
.code svg { width: 32px; height: 30px; }
td strong { font: bold 17px/20px "DejaVu Sans Condensed", sans-serif; }
td.sel { background: #316ac5; box-shadow: none; outline: 1px dotted #f0b050; outline-offset: -2px; }
td.mark { box-shadow: inset -1px -1px #00b000; }
.mark::after { content: ""; position: absolute; right: 0; top: 1px; width: 6px; height: 6px; background: linear-gradient(225deg, #00b000 50%, transparent 50%); }
.clip { position: absolute; right: 2px; bottom: 3px; width: 13px; height: 14px; }
.brick { margin-top: 12px; }
.ban { position: absolute; right: 2px; top: 0; }

.vs { position: relative; display: flex; flex-direction: column; background: linear-gradient(90deg, #f3f1ec, #fefefb); }
.hs { position: relative; display: flex; background: linear-gradient(#f3f1ec, #fefefb); }
.sb { width: 20px; height: 20px; flex: none; border: 1px solid #fff; border-radius: 3px; background: linear-gradient(90deg, #c8d6fb, #b9cdfb); box-shadow: inset -1px -1px #98b0e8, 0 0 1px #98b0e8; display: flex; align-items: center; justify-content: center; }
.sb svg { width: 10px; height: 10px; }
.hs .end { margin-left: auto; }
.vs .end { margin-top: auto; }
.hatch { margin-left: 1px; }
.hatch::after { content: ""; width: 8px; height: 8px; background: repeating-linear-gradient(90deg, #eef4fe 0 1px, #8cb0f8 1px 2px); }
.hatchv::after { content: ""; width: 8px; height: 8px; background: repeating-linear-gradient(#eef4fe 0 1px, #8cb0f8 1px 2px); }
.grid .vthumb { margin-top: 200px; height: 40px; }
.abk .grid .vthumb { margin-top: 153px; height: 226px; }
.corner { background: #ece9d8; border: solid #716f64; border-width: 1px 0 0 1px; }
.tabs { display: flex; align-items: flex-start; height: 26px; margin-top: 1px; padding: 0 0 0 1px; border-bottom: 1px solid #aca899; border-top: 1px solid #716f64; box-shadow: 0 -1px #aca899; gap: 2px; }
.tabs button { height: 23px; padding: 1px 7px 0 4px; border: solid #716f64; border-width: 0 2px 2px 0; border-radius: 0 0 3px 0; box-shadow: inset 1px 0 #fff; line-height: 20px; }
.tabs button.on { height: 24px; padding: 3px 5px 0 6px; margin-top: -1px; background: #ece9d8; margin-right: -2px; }
.tabs button.on + button { border-left-width: 2px; }
.lower { display: flex; padding-top: 1px; border-top: 1px solid #fff; border-bottom: 1px solid #aca899; }
.dock { width: 14px; flex: none; display: flex; flex-direction: column; padding: 2px 1px 0; }
.dock button { width: 11px; height: 10px; border: 1px solid #fff; border-right-color: #716f64; border-bottom-color: #716f64; }
.dock svg { width: 7px; height: 7px; margin: 0 1px; }
.dock i { flex: 1; width: 6px; margin: 2px 0 0 3px; border: solid #aca899; border-width: 0 1px; box-shadow: inset 1px 0 #fff, inset -1px 0 #fff; }
.res-pane { flex: 1; min-width: 0; margin-right: 1px; border-right: 2px solid #8c897c; }
.tabs2 { display: flex; align-items: flex-end; height: 25px; border-bottom: 1px solid #fff; }
.tabs2 button { height: 21px; padding: 0 8px 0 6px; border: solid #fff; border-width: 1px 1px 0; border-radius: 3px 3px 0 0; line-height: 19px; }
.tabs2 button.on { height: 24px; padding: 0 10px 0 6px; border-right: 2px solid #716f64; background: #ece9d8; margin-bottom: -1px; line-height: 21px; }
.rbox { display: flex; margin: 3px 4px 0 2px; height: 50px; border-top: 1px solid #aca899; }
.pal { position: relative; width: 27px; flex: none; border: 1px solid #fff; border-right-color: #aca899; border-bottom-color: #aca899; }
.pal i { display: block; height: 2px; margin: 3px 2px 0; border: 1px solid #aca899; border-top-color: #fff; }
.pal button { margin: 6px 0 0 6px; }
.pal button svg { width: 12px; height: 12px; }
.more { position: absolute; right: 4px; bottom: 3px; width: 7px; height: 9px; }
.rgrid { flex: 1; min-width: 0; border-left: 1px solid #aca899; }
.rview { height: 28px; overflow: hidden; }
.rt { width: 660px; }
.rt th { height: 60px; }
.rstat { height: 20px; margin: 2px 4px 2px 2px; border: 1px solid #fff; border-top-color: #aca899; border-left-color: #aca899; }

.mv { padding-top: 1px; }
.mv .vthumb { margin-top: 22px; height: 598px; width: 19px; background: linear-gradient(90deg, #cad8fc, #b4c8f8); }
.mh { grid-column: 1 / -1; padding-right: 21px; }
.mh .hatch { margin: 0 31px 0 24px; flex: 1; background: linear-gradient(#cad8fc, #b4c8f8); }
.status { position: relative; display: grid; grid-template-columns: 110px 300px minmax(0, 1fr) 42px; height: 34px; border-top: 1px solid #fff; padding-top: 2px; box-shadow: inset 0 1px #ece9d8; }
.status span { padding-top: 7px; }
.status .p1, .status .p2, .status .p3 { border: solid #aca899; border-width: 1px 0 0 1px; box-shadow: inset -1px -1px #fff; }
.status .p2 { margin-left: 2px; }
.sizer { position: absolute; right: 1px; bottom: 1px; width: 14px; height: 14px; }

.task { display: flex; align-items: stretch; height: 38px; background: linear-gradient(#1f5ad0, #3f8cf0 8%, #2a68e0 20%, #245cdc 50%, #2460e0 85%, #1c48b8); color: #fff; }
.start { display: flex; align-items: center; width: 112px; margin-top: 4px; padding-left: 10px; border-radius: 0 12px 12px 0; background: linear-gradient(#3c8c3c, #6cb868 8%, #3c9a3c 30%, #3a983a 75%, #2c7c2c); box-shadow: inset -3px 0 4px #286828; }
.start svg { width: 24px; height: 22px; }
.start em { font: italic bold 21px/24px "Open Sans", sans-serif; margin-left: 6px; text-shadow: 1px 1px 2px #204020; }
.dots { width: 6px; margin: 8px 7px 8px 9px; background: radial-gradient(circle at 1px 1px, #0c3cac 1px, transparent 2px) 0 0 / 6px 6px, radial-gradient(circle at 1px 1px, #0c3cac 1px, transparent 2px) 3px 3px / 6px 6px; flex: none; }
.quick { display: flex; align-items: center; padding-top: 4px; width: 127px; gap: 7px; }
.tbs { display: flex; flex: 1; gap: 1px; padding: 7px 0 2px; }
.tb { display: flex; align-items: center; width: 159px; padding-left: 9px; border-radius: 3px; background: linear-gradient(#5c9cf8, #3c80f0 15%, #3a7cf0 85%, #2a64d0); gap: 4px; }
.tb.on { background: #1c4cb4; box-shadow: inset 1px 1px 1px #0c2c80; }
.tray { display: flex; align-items: center; gap: 2px; margin-left: 31px; margin-top: 4px; padding: 0 16px 0 8px; border-left: 1px solid #0c3c90; border-top: 1px solid #20c0f8; background: linear-gradient(#1890f0, #18a0f0 80%, #1080d8); }
.tray time { margin: 0 2px 0 9px; }

.dialog { position: absolute; left: 488px; top: 421px; width: 518px; border: 3px solid #0848d8; border-top: 0; border-bottom-color: #0430a0; border-radius: 8px 8px 0 0; background: #ece9d8; overflow: hidden; }
.dialog header { display: flex; align-items: center; justify-content: space-between; height: 35px; margin: 0 -3px; padding: 3px 5px 0 7px; background: linear-gradient(#0848c8, #3c90ff 8%, #0858e8 22%, #0455e4 50%, #0468ff 80%, #0460f4 90%, #0038b8); color: #fff; }
.dialog h1 { margin: 0; font: bold 15px/20px "Noto Sans", sans-serif; text-shadow: 1px 1px #0a1883; }
.dialog .cb { width: 27px; height: 27px; border-color: #fff; }
.dialog .cb.x { background: linear-gradient(135deg, #f09070, #e05030 50%, #c84018); }
.dialog .cb svg { width: 19px; height: 19px; }
.dbody { display: grid; grid-template: 55px auto / 57px 1fr; height: 115px; padding: 15px 0 0 14px; }
.warn { width: 32px; height: 32px; }
.dbody p { margin: 0; white-space: nowrap; }
.ok { grid-column: 1 / -1; width: 100px; height: 30px; margin-left: 192px; border: 1px solid #000; box-shadow: inset 1px 1px #fff, inset -1px -1px #716f64, inset -2px -2px #aca899; align-self: start; }
</style>
